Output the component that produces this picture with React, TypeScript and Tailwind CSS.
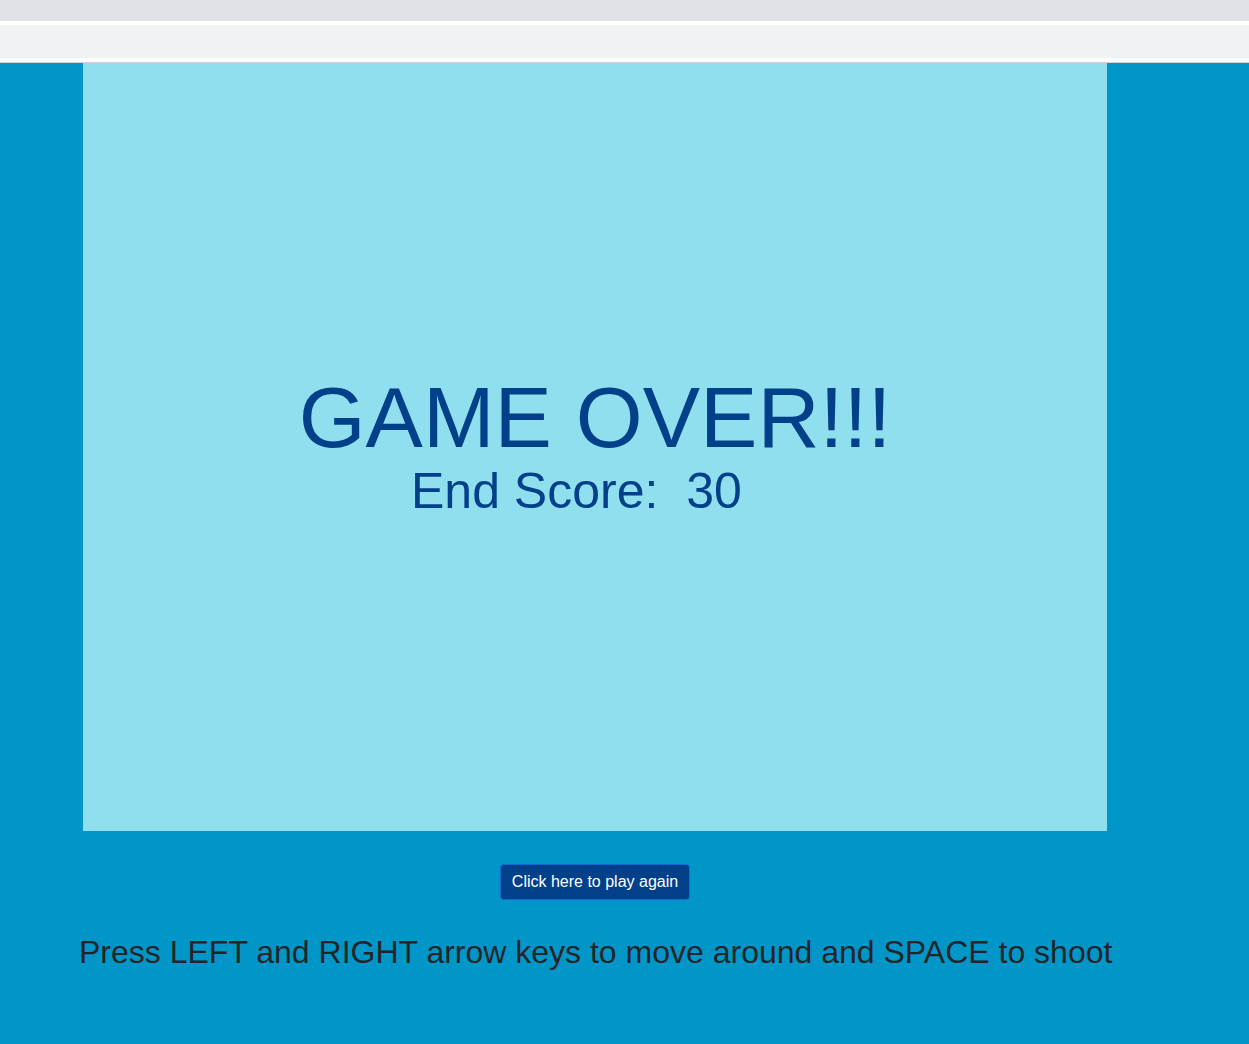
import React from "react";

export default function App() {
  return (
    <div className="min-h-[1044px] bg-[#0096c8]" style={{ fontFamily: '"Liberation Sans", Arial, sans-serif' }}>
      <div className="h-[21px] bg-[#dee2e6]" />
      <div className="h-[4px] bg-white" />
      <div className="h-[33px] bg-[#f1f2f4]" />
      <div className="h-[4px] bg-white" />
      <div className="h-[1px] bg-[#cfd3d7]" />
      <div className="pl-[83px]">
        <div className="w-[1024px] h-[768px] bg-[#90dfee] flex flex-col text-[#02408a]">
          <div className="h-[308px] shrink-0" />
          <div className="text-center text-[86px] leading-[93px]">GAME OVER!!!</div>
          <div className="pl-[328px] text-[50px] leading-[54px] whitespace-pre">End Score:  30</div>
        </div>
      </div>
      <div className="pl-[83px] pt-[33px]">
        <div className="w-[1024px] flex justify-center">
          <button className="h-[36px] px-[11px] bg-[#02408a] border border-[#1467d6] rounded-[4px] text-white text-[16px] leading-[20px]">
            Click here to play again
          </button>
        </div>
      </div>
      <div className="pl-[79px] pt-[33px] text-[32px] leading-[39px] text-[#212529]">
        Press LEFT and RIGHT arrow keys to move around and SPACE to shoot
      </div>
    </div>
  );
}
